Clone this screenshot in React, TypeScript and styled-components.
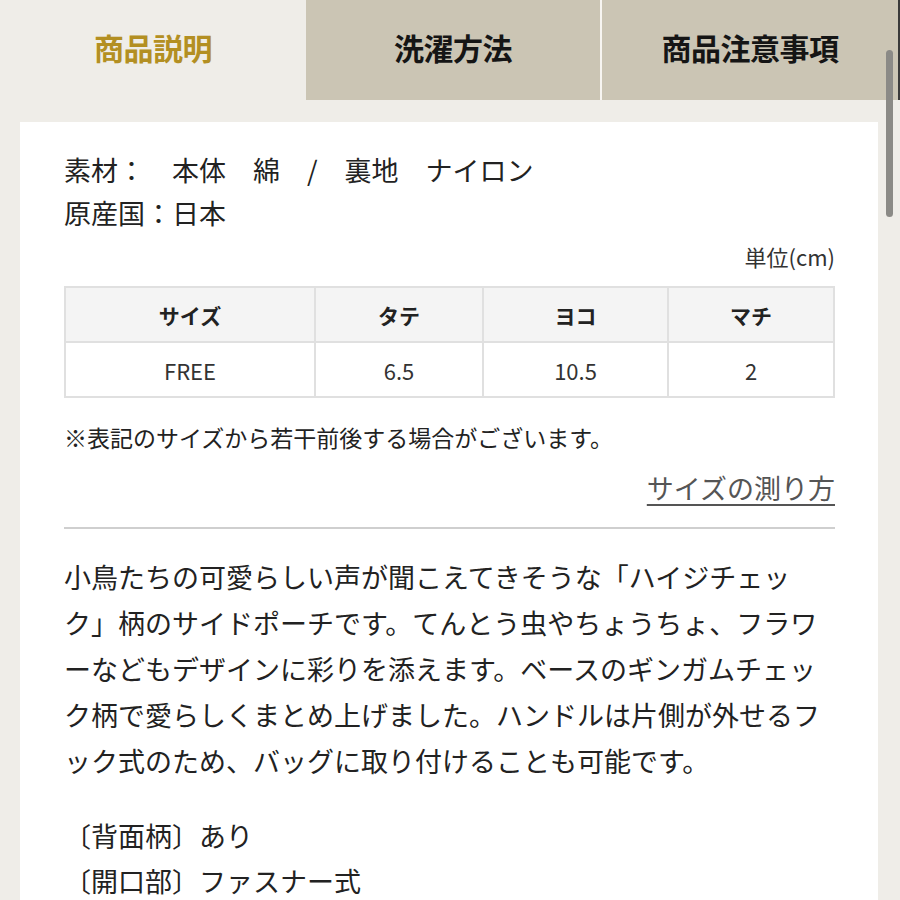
import React from 'react'
import { styled, createGlobalStyle } from 'styled-components'

const GlobalStyle = createGlobalStyle`
  html, body {
    margin: 0;
    padding: 0;
    background: #efede8;
    font-family: "Noto Sans CJK JP", "Noto Sans", sans-serif;
    color: #222;
  }
`

type Tab = { label: string; active?: boolean }

const tabs: Tab[] = [
  { label: '商品説明', active: true },
  { label: '洗濯方法' },
  { label: '商品注意事項' },
]

const sizeHead = ['サイズ', 'タテ', 'ヨコ', 'マチ']
const sizeRow = ['FREE', '6.5', '10.5', '2']

const description = [
  '小鳥たちの可愛らしい声が聞こえてきそうな「ハイジチェッ',
  'ク」柄のサイドポーチです。てんとう虫やちょうちょ、フラワ',
  'ーなどもデザインに彩りを添えます。ベースのギンガムチェッ',
  'ク柄で愛らしくまとめ上げました。ハンドルは片側が外せるフ',
  'ック式のため、バッグに取り付けることも可能です。',
]

const specs = ['〔背面柄〕あり', '〔開口部〕ファスナー式']

const App: React.FC = () => {
  return (
    <Page>
      <GlobalStyle />
      <TabBar>
        {tabs.map((t, i) => (
          <TabItem key={t.label} $active={t.active} $divider={i === 2}>
            {t.label}
          </TabItem>
        ))}
      </TabBar>
      <Card>
        <InfoLine>素材：　本体　綿　/　裏地　ナイロン</InfoLine>
        <InfoLine>原産国：日本</InfoLine>
        <Unit>単位(cm)</Unit>
        <SizeTable>
          <colgroup>
            <col style={{ width: 250 }} />
            <col style={{ width: 168 }} />
            <col style={{ width: 185 }} />
            <col />
          </colgroup>
          <thead>
            <tr>
              {sizeHead.map((h) => (
                <HeadCell key={h}>{h}</HeadCell>
              ))}
            </tr>
          </thead>
          <tbody>
            <tr>
              {sizeRow.map((v, i) => (
                <BodyCell key={i}>{v}</BodyCell>
              ))}
            </tr>
          </tbody>
        </SizeTable>
        <Note>※表記のサイズから若干前後する場合がございます。</Note>
        <LinkRow>
          <SizeLink href="#">サイズの測り方</SizeLink>
        </LinkRow>
        <Divider />
        <Description>
          {description.map((line) => (
            <Line key={line}>{line}</Line>
          ))}
        </Description>
        <Specs>
          {specs.map((s) => (
            <Line key={s}>{s}</Line>
          ))}
        </Specs>
      </Card>
      <ScrollThumb />
    </Page>
  )
}

const Page = styled.div`
  position: relative;
  width: 900px;
  height: 900px;
  overflow: hidden;
  display: flex;
  flex-direction: column;
  background: #efede8;
`

const TabBar = styled.div`
  display: grid;
  grid-template-columns: 306px 294px 1fr;
  height: 100px;
  flex-shrink: 0;
`

const TabItem = styled.div<{ $active?: boolean; $divider?: boolean }>`
  display: flex;
  align-items: center;
  justify-content: center;
  padding-bottom: 7px;
  font-size: 30px;
  font-weight: 700;
  letter-spacing: -0.5px;
  color: #151515;
  background: #cbc5b4;

  ${(props) =>
    props.$active &&
    `
    background: #efede8;
    color: #b38f22;
  `}

  ${(props) =>
    props.$divider &&
    `
    border-left: 2px solid #f7f5f1;
    border-right: 2px solid #3a3a3a;
  `}
`

const Card = styled.div`
  display: flex;
  flex-direction: column;
  margin: 22px 22px 0 20px;
  padding: 26px 43px 0 44px;
  background: #fff;
  flex: 1;
`

const InfoLine = styled.div`
  font-size: 27px;
  line-height: 43px;
  color: #222;
  white-space: pre;
`

const Unit = styled.div`
  margin-top: 7px;
  text-align: right;
  font-size: 22px;
  line-height: 30px;
  color: #333;
`

const SizeTable = styled.table`
  margin-top: 15px;
  width: 100%;
  border-collapse: collapse;
  table-layout: fixed;
`

const HeadCell = styled.th`
  height: 53px;
  padding: 0;
  border: 2px solid #e0e0e0;
  background: #f4f4f4;
  font-size: 21px;
  font-weight: 700;
  color: #222;
  text-align: center;
`

const BodyCell = styled.td`
  height: 53px;
  padding: 0;
  border: 2px solid #e0e0e0;
  background: #fff;
  font-size: 22px;
  color: #333;
  text-align: center;
`

const Note = styled.div`
  margin-top: 22px;
  font-size: 23px;
  line-height: 34px;
  color: #222;
`

const LinkRow = styled.div`
  margin-top: 14px;
  display: flex;
  justify-content: flex-end;
`

const SizeLink = styled.a`
  font-size: 27px;
  line-height: 40px;
  color: #555;
  text-decoration: underline;
  text-underline-offset: 5px;
  text-decoration-thickness: 2px;
`

const Divider = styled.hr`
  margin: 19px 0 0;
  border: 0;
  border-top: 2px solid #cfcfcf;
  height: 0;
`

const Description = styled.div`
  margin-top: 25px;
  font-size: 27px;
  line-height: 46px;
  color: #222;
`

const Specs = styled.div`
  margin-top: 29px;
  font-size: 27px;
  line-height: 45px;
  color: #222;
`

const Line = styled.div`
  white-space: nowrap;
`

const ScrollThumb = styled.div`
  position: absolute;
  top: 50px;
  left: 886px;
  width: 7px;
  height: 167px;
  border-radius: 4px;
  background: #8b8a86;
`

export default App
